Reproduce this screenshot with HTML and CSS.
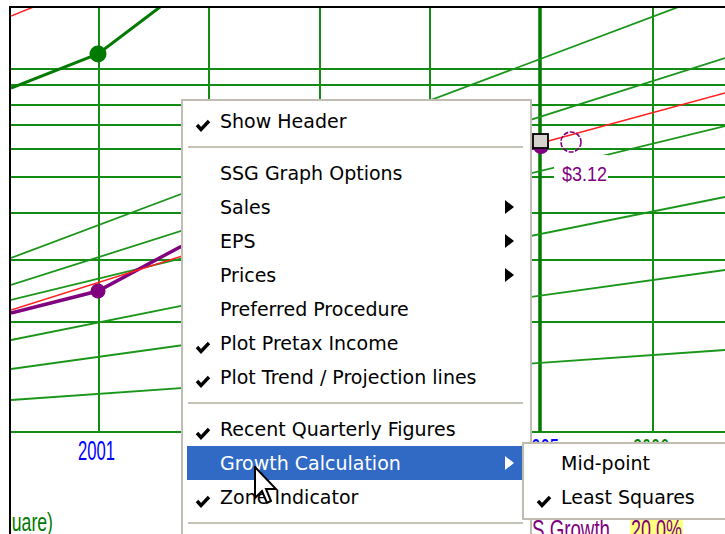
FILE: index.html
```html
<!DOCTYPE html>
<html lang="en">
<head>
<meta charset="UTF-8">
<title>SSG Graph - context menu</title>
<link rel="stylesheet" href="styles.css">
</head>
<body>
<div class="screen">

    <!-- chart drawn as one svg, the menus lie over it -->
    <svg class="chart" width="725" height="534" viewBox="0 0 725 534">
        <defs>
            <clipPath id="plot"><rect x="11" y="8" width="714" height="526"/></clipPath>
        </defs>
        <rect class="paper" x="0" y="0" width="725" height="534"/>
        <g clip-path="url(#plot)">
            <g class="grid">
                <line x1="99" y1="8" x2="99" y2="432"/>
                <line x1="209" y1="8" x2="209" y2="432"/>
                <line x1="320" y1="8" x2="320" y2="432"/>
                <line x1="430" y1="8" x2="430" y2="432"/>
                <line x1="653" y1="8" x2="653" y2="432"/>
                <line x1="11" y1="69" x2="725" y2="69"/>
                <line x1="11" y1="85" x2="725" y2="85"/>
                <line x1="11" y1="105" x2="725" y2="105"/>
                <line x1="11" y1="125" x2="725" y2="125"/>
                <line x1="11" y1="149" x2="725" y2="149"/>
                <line x1="11" y1="177" x2="725" y2="177"/>
                <line x1="11" y1="213" x2="725" y2="213"/>
                <line x1="11" y1="260" x2="725" y2="260"/>
                <line x1="11" y1="322" x2="725" y2="322"/>
                <line x1="11" y1="432" x2="725" y2="432"/>
            </g>
            <line class="now-line" x1="540" y1="8" x2="540" y2="432"/>

            <g class="trend">
                <line x1="11" y1="258" x2="705" y2="-3"/>
                <line x1="11" y1="285" x2="725" y2="58"/>
                <line x1="11" y1="300" x2="725" y2="126"/>
                <line x1="11" y1="340" x2="725" y2="197"/>
                <line x1="11" y1="369" x2="725" y2="270"/>
                <line x1="11" y1="400" x2="725" y2="350"/>
            </g>

            <!-- sales curve -->
            <polyline class="sales" points="11,88 98,54 160,7 172,-3"/>
            <circle class="sales-dot" cx="98" cy="54" r="8.5"/>
            <line class="red" x1="11" y1="16" x2="36" y2="6"/>

            <!-- eps curve -->
            <polyline class="eps" points="11,313 98,291 180,247 330,195 541,146"/>
            <circle class="eps-dot" cx="98" cy="291" r="7.5"/>
            <circle class="eps-dot" cx="541" cy="146" r="8"/>
            <polyline class="red" points="11,310 541,143 725,93"/>
            <rect class="marker" x="533" y="134" width="15" height="14"/>
            <circle class="hollow" cx="571" cy="142" r="10"/>

            <rect class="label-bg" x="554" y="155" width="54" height="26"/>
            <text class="eps-text" x="562" y="181" textLength="45" lengthAdjust="spacingAndGlyphs">$3.12</text>

            <text class="year" x="78" y="460" textLength="37" lengthAdjust="spacingAndGlyphs">2001</text>
            <text class="year" x="522" y="458" textLength="37" lengthAdjust="spacingAndGlyphs">2005</text>
            <text class="year proj" x="633" y="458" textLength="36" lengthAdjust="spacingAndGlyphs">2006</text>

            <text class="method" x="2" y="531" textLength="51" lengthAdjust="spacingAndGlyphs">quare)</text>
            <text class="growth" x="532" y="539" textLength="78" lengthAdjust="spacingAndGlyphs">S Growth</text>
            <rect class="hilite" x="630" y="519" width="53" height="20"/>
            <text class="growth" x="631" y="539" textLength="51" lengthAdjust="spacingAndGlyphs">20.0%</text>
        </g>
        <rect class="frame" x="9" y="6" width="716" height="2"/>
        <rect class="frame" x="9" y="6" width="2" height="528"/>
    </svg>

    <div class="menu main-menu">
        <div class="item"><svg class="check" viewBox="0 0 16 13"><polyline points="2,6 6,10.5 14,2"/></svg>Show Header</div>
        <div class="sep"></div>
        <div class="item">SSG Graph Options</div>
        <div class="item">Sales<span class="arrow"></span></div>
        <div class="item">EPS<span class="arrow"></span></div>
        <div class="item">Prices<span class="arrow"></span></div>
        <div class="item">Preferred Procedure</div>
        <div class="item"><svg class="check" viewBox="0 0 16 13"><polyline points="2,6 6,10.5 14,2"/></svg>Plot Pretax Income</div>
        <div class="item"><svg class="check" viewBox="0 0 16 13"><polyline points="2,6 6,10.5 14,2"/></svg>Plot Trend / Projection lines</div>
        <div class="sep"></div>
        <div class="item"><svg class="check" viewBox="0 0 16 13"><polyline points="2,6 6,10.5 14,2"/></svg>Recent Quarterly Figures</div>
        <div class="item active">Growth Calculation<span class="arrow"></span></div>
        <div class="item"><svg class="check" viewBox="0 0 16 13"><polyline points="2,6 6,10.5 14,2"/></svg>Zone Indicator</div>
        <div class="sep"></div>
    </div>

    <div class="menu sub-menu">
        <div class="item">Mid-point</div>
        <div class="item"><svg class="check" viewBox="0 0 16 13"><polyline points="2,6 6,10.5 14,2"/></svg>Least Squares</div>
    </div>

    <svg class="cursor" viewBox="0 0 12 20">
        <path d="M0.5 0.5 L0.5 16 L4 12.5 L6.5 18.5 L8.5 17.5 L6 11.5 L11 11.5 Z"/>
    </svg>
</div>
</body>
</html>
```
FILE: styles.css
```css
/* page */
* {
    margin: 0;
    padding: 0;
    box-sizing: border-box;
}

body {
    background: #fff;
}

.screen {
    position: relative;
    width: 725px;
    height: 534px;
    overflow: hidden;
}

/* chart */
.chart {
    display: block;
}

.paper {
    fill: #fff;
}

.frame {
    fill: #000;
}

.grid line {
    stroke: #138c13;
    stroke-width: 2;
}

.now-line {
    stroke: #007a00;
    stroke-width: 3.5;
}

.trend line {
    stroke: #1a961a;
    stroke-width: 1.8;
}

.sales {
    fill: none;
    stroke: #007a00;
    stroke-width: 3;
}

.sales-dot {
    fill: #007a00;
}

.eps {
    fill: none;
    stroke: #800080;
    stroke-width: 3.5;
}

.eps-dot {
    fill: #800080;
}

.red {
    fill: none;
    stroke: #ff2020;
    stroke-width: 1.5;
}

.marker {
    fill: #d6d3ce;
    stroke: #000;
    stroke-width: 1.8;
}

.hollow {
    fill: none;
    stroke: #800080;
    stroke-width: 1.6;
    stroke-dasharray: 5 1.5;
}

.label-bg {
    fill: #fff;
}

.eps-text,
.growth {
    fill: #800080;
    font-family: "Liberation Sans", Arial, sans-serif;
    font-size: 21px;
}

.growth {
    font-size: 27px;
}

.year {
    fill: #0000ff;
    font-family: "Liberation Sans", Arial, sans-serif;
    font-size: 27px;
}

.year.proj {
    fill: #008000;
}

.method {
    fill: #007a00;
    font-family: "Liberation Sans", Arial, sans-serif;
    font-size: 26px;
}

.hilite {
    fill: #ffff80;
}

/* menus */
.menu {
    position: absolute;
    background: #fff;
    border: 2px solid #c0bcb1;
    font-family: "DejaVu Sans", Verdana, sans-serif;
    font-size: 19px;
    color: #000;
}

.main-menu {
    left: 181px;
    top: 99px;
    width: 351px;
    padding: 3px 4px 20px;
}

.sub-menu {
    left: 522px;
    top: 442px;
    width: 240px;
    padding: 2px 4px 4px;
}

.item {
    position: relative;
    height: 34px;
    line-height: 34px;
    padding-left: 33px;
    white-space: nowrap;
}

.item.active {
    background: #316ac5;
    color: #fff;
}

.check {
    position: absolute;
    left: 8px;
    top: 15px;
    width: 16px;
    height: 13px;
}

.check polyline {
    fill: none;
    stroke: #000;
    stroke-width: 3.4;
}

.arrow {
    position: absolute;
    right: 12px;
    top: 10px;
    border-left: 9px solid #000;
    border-top: 7px solid transparent;
    border-bottom: 7px solid transparent;
}

.item.active .arrow {
    border-left-color: #fff;
}

.sep {
    height: 2px;
    margin: 8px 3px 8px 1px;
    background: #c5c2b8;
}

/* mouse pointer */
.cursor {
    position: absolute;
    left: 254px;
    top: 466px;
    width: 24px;
    height: 40px;
}

.cursor path {
    fill: #fff;
    stroke: #000;
    stroke-width: 1;
}
```
